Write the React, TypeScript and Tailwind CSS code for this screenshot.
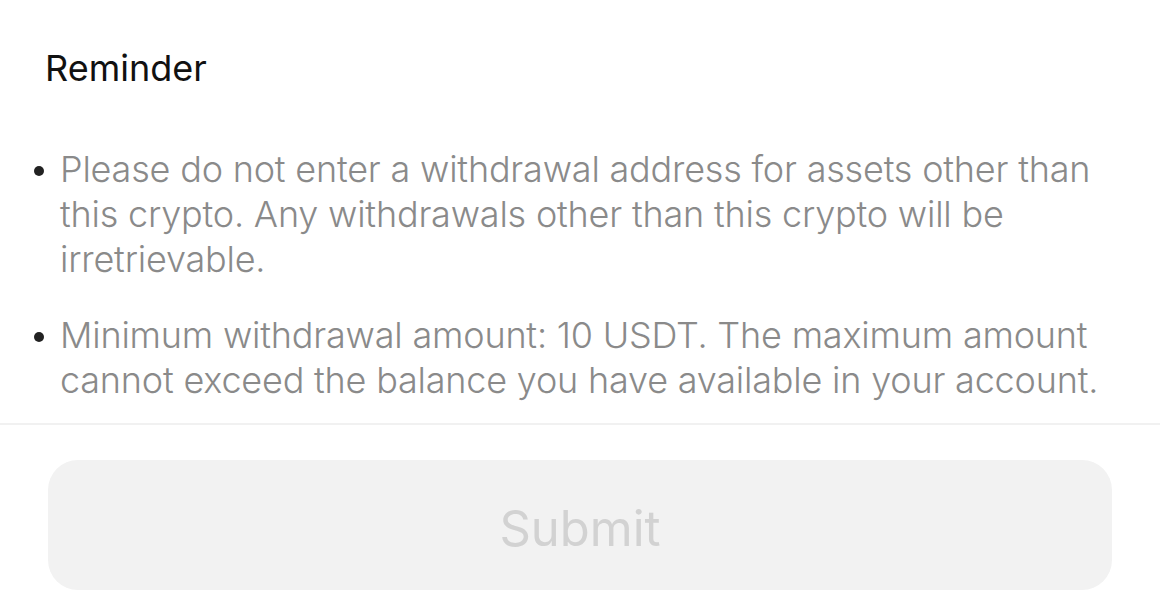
export default function App() {
    const items = [
        "Please do not enter a withdrawal address for assets other than this crypto. Any withdrawals other than this crypto will be irretrievable.",
        "Minimum withdrawal amount:  10 USDT. The maximum amount cannot exceed the balance you have available in your account.",
    ];

    return (
        <div className="w-[1160px] h-[614px] bg-white overflow-hidden font-['Inter',sans-serif]">
            {/* Reminder */}
            <div className="px-[45px] pt-[44px] text-[36px] leading-[48px] text-[#111]">
                Reminder
            </div>

            <ul className="mt-[55px] pl-[34px] pr-[30px] flex flex-col gap-[31px]">
                {items.map((text, i) => (
                    <li key={i} className="flex items-start">
                        <span className="mt-[19px] mr-[16px] w-[10px] h-[10px] shrink-0 rounded-full bg-[#222]" />
                        <p className="text-[36px] leading-[45px] text-[#8a8a8a] font-light tracking-[-0.2px]">
                            {text}
                        </p>
                    </li>
                ))}
            </ul>

            {/* Divider */}
            <div className="mt-[20px] h-[2px] bg-[#f1f1f1]" />

            {/* Submit */}
            <div className="px-[48px] pt-[35px]">
                <button className="w-full h-[130px] pt-[8px] rounded-[30px] bg-[#f2f2f2] text-[49px] text-[#d2d2d2] font-['Inter',sans-serif]">
                    Submit
                </button>
            </div>
        </div>
    );
}
